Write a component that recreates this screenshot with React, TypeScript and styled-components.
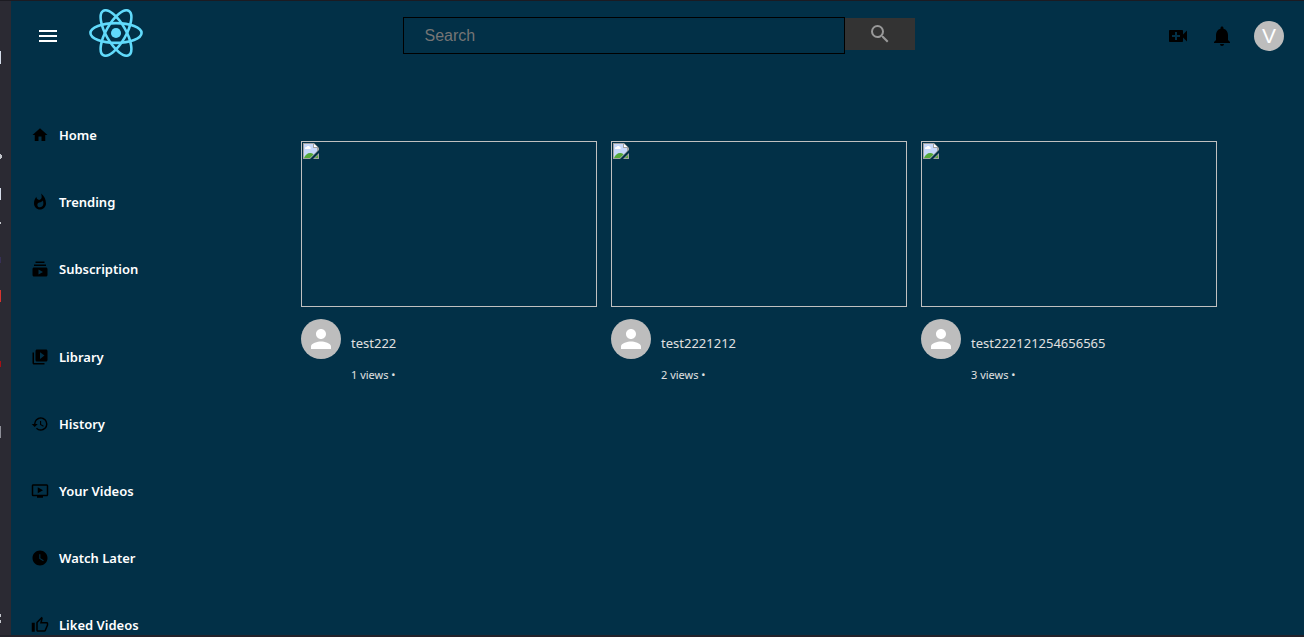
import React from "react";
import styled, { createGlobalStyle } from "styled-components";
import {
  MdHistory,
  MdHome,
  MdMenu,
  MdNotifications,
  MdOndemandVideo,
  MdPerson,
  MdSearch,
  MdSubscriptions,
  MdVideoCall,
  MdVideoLibrary,
  MdWatchLater,
  MdWhatshot,
} from "react-icons/md";

const GlobalStyle = createGlobalStyle`
  *, *::before, *::after { box-sizing: border-box; }
  body {
    margin: 0;
    background: #023047;
    font-family: "Segoe UI", "Noto Sans", sans-serif;
  }
  svg { display: block; flex-shrink: 0; }
`;

const Shell = styled.div`
  display: flex;
  height: 100vh;
  overflow: hidden;
  border-top: 1px solid #1c1b22;
  border-bottom: 2px solid #23222a;
`;

const Dock = styled.div`
  flex: 0 0 11px;
  background: #2b2a33;
`;

const Page = styled.div`
  flex: 1;
  min-width: 0;
  background: #023047;
`;

const Header = styled.header`
  display: flex;
  align-items: center;
  justify-content: space-between;
  height: 70px;
  padding: 0 20px 0 25px;
`;

const HeaderGroup = styled.div<{ $gap: number }>`
  display: flex;
  align-items: center;
  gap: ${({ $gap }) => $gap}px;
`;

const IconButton = styled.button<{ $color: string }>`
  display: flex;
  padding: 0;
  border: 0;
  background: none;
  color: ${({ $color }) => $color};
  cursor: pointer;
`;

const LogoLink = styled.a`
  display: flex;
  justify-content: center;
  width: 71px;
  padding-bottom: 6px;
`;

const SearchForm = styled.form`
  display: flex;
  flex: 0 1 512px;
  align-items: flex-start;
  min-width: 0;
  padding-bottom: 1px;
`;

const SearchInput = styled.input`
  flex: 1;
  min-width: 0;
  height: 37px;
  padding: 1px 21px 0;
  border: 1px solid #000;
  border-radius: 0;
  background: transparent;
  color: #fff;
  font: 16px "Liberation Sans", Arial, sans-serif;
  outline: 0;
  &::placeholder { color: #757575; opacity: 1; }
`;

const SearchButton = styled.button`
  display: flex;
  align-items: center;
  justify-content: center;
  width: 70px;
  height: 32px;
  margin-top: 1px;
  padding: 0;
  border: 0;
  background: #333;
  color: #999;
  cursor: pointer;
`;

const Avatar = styled.span<{ $size: number }>`
  display: flex;
  flex: 0 0 auto;
  align-items: center;
  justify-content: center;
  width: ${({ $size }) => $size}px;
  height: ${({ $size }) => $size}px;
  border-radius: 50%;
  background: #bdbdbd;
  color: #fff;
  font: 21px/20px "Liberation Sans", Arial, sans-serif;
`;

const Body = styled.div`
  display: flex;
`;

const Sidebar = styled.nav`
  flex: 0 0 290px;
  padding: 30px 20px 0;
`;

const NavList = styled.ul`
  margin: 0 0 21px;
  padding: 0;
  list-style: none;
`;

const NavLink = styled.a`
  display: flex;
  align-items: center;
  gap: 10px;
  height: 67px;
  color: #fff;
  font-size: 13px;
  font-weight: 600;
  line-height: 20px;
  text-decoration: none;
  svg { color: #000; }
`;

const VideoGrid = styled.main`
  display: grid;
  flex: 1;
  grid-template-columns: repeat(auto-fill, 296px);
  gap: 14px;
  align-content: start;
  padding-top: 70px;
`;

const Thumbnail = styled.div`
  height: 166px;
  padding: 1px;
  border: 1px solid #c0c0c0;
`;

const VideoInfo = styled.div`
  display: flex;
  gap: 10px;
  margin-top: 12px;
`;

const VideoTitle = styled.h2`
  margin: 14px 0 12px;
  color: #e0e0e0;
  font-size: 13px;
  font-weight: 400;
  line-height: 20px;
`;

const VideoViews = styled.p`
  margin: 0;
  color: #e0e0e0;
  font-size: 11px;
  line-height: 20px;
`;

const ReactLogo = () => (
  <svg width="54" height="48" viewBox="-11.5 -10.23 23 20.46" aria-hidden="true">
    <circle r="2.15" fill="#61dafb" />
    <g stroke="#61dafb" strokeWidth="1.1" fill="none">
      <ellipse rx="10.9" ry="4.2" />
      <ellipse rx="10.9" ry="4.2" transform="rotate(60)" />
      <ellipse rx="10.9" ry="4.2" transform="rotate(120)" />
    </g>
  </svg>
);

const ThumbOutline = ({ size }: { size: number }) => (
  <svg width={size} height={size} viewBox="0 0 24 24" fill="currentColor" aria-hidden="true">
    <path d="M9 21h9c.83 0 1.54-.5 1.84-1.22l3.02-7.05c.09-.23.14-.47.14-.73v-2c0-1.1-.9-2-2-2h-6.31l.95-4.57.03-.32c0-.41-.17-.79-.44-1.06L14.17 1 7.58 7.59C7.22 7.95 7 8.45 7 9v10c0 1.1.9 2 2 2zM9 9l4.34-4.34L12 10h9v2l-3 7H9V9zM1 9h4v12H1z" />
  </svg>
);

const MissingPicture = () => (
  <svg width="16" height="16" viewBox="0 0 16 16" role="img" aria-label="Missing thumbnail">
    <path d="M0 0h11l5 5v2L7 16H0z" fill="#a3a3a3" />
    <path d="M1 1h9v4h4v3L7 15H1z" fill="#c6d8fa" />
    <path d="M2 5c0-1 1-1 1.500-1 .5-1.500 3-1.500 3.500 0C8 4 8 6 7 6H2z" fill="#fff" />
    <path d="M1 15c1-3 3.500-5 6-5 1.500 0 3 .5 3.500 1.500L7 15z" fill="#56a93a" />
    <path d="M11 1v3h3.500z" fill="#fff" />
    <path d="M16 10v6h-6z" fill="#a3a3a3" />
    <path d="M15 12v3h-3z" fill="#56a93a" />
  </svg>
);

/* Right-hand edges of the dock icons that reach into view. */
const DockEdges = () => (
  <svg width="2" height="634" viewBox="0 0 2 634" aria-hidden="true">
    <path d="M0 50h1v13H0zM0 187h1v12H0z" fill="#d5dcea" />
    <path d="M0 153h1v1h1v3H1v1H0zM0 221h1v2H0zM0 613h1v3H0zM0 619h1v3H0z" fill="#c4c6cc" />
    <path d="M0 256h1v6H0z" fill="#373057" />
    <path d="M0 289h1v12H0z" fill="#d8342f" />
    <path d="M0 360h1v6H0z" fill="#a80f14" />
    <path d="M0 425h1v12H0z" fill="#8e8f98" />
  </svg>
);

const primaryLinks = [
  { label: "Home", Icon: MdHome },
  { label: "Trending", Icon: MdWhatshot },
  { label: "Subscription", Icon: MdSubscriptions },
];

const libraryLinks = [
  { label: "Library", Icon: MdVideoLibrary },
  { label: "History", Icon: MdHistory },
  { label: "Your Videos", Icon: MdOndemandVideo },
  { label: "Watch Later", Icon: MdWatchLater },
  { label: "Liked Videos", Icon: ThumbOutline },
];

const videos = [
  { title: "test222", views: 1 },
  { title: "test2221212", views: 2 },
  { title: "test222121254656565", views: 3 },
];

export default function App() {
  return (
    <>
      <GlobalStyle />
      <Shell>
        <Dock>
          <DockEdges />
        </Dock>
        <Page>
          <Header>
            <HeaderGroup $gap={20}>
              <IconButton $color="#fff" aria-label="Menu">
                <MdMenu size={24} />
              </IconButton>
              <LogoLink href="#" aria-label="Home page">
                <ReactLogo />
              </LogoLink>
            </HeaderGroup>
            <SearchForm onSubmit={(event) => event.preventDefault()}>
              <SearchInput type="text" placeholder="Search" aria-label="Search" />
              <SearchButton type="submit" aria-label="Submit search">
                <MdSearch size={24} />
              </SearchButton>
            </SearchForm>
            <HeaderGroup $gap={20}>
              <IconButton $color="#000" aria-label="Create video">
                <MdVideoCall size={24} />
              </IconButton>
              <IconButton $color="#000" aria-label="Notifications">
                <MdNotifications size={24} />
              </IconButton>
              <Avatar $size={30}>V</Avatar>
            </HeaderGroup>
          </Header>
          <Body>
            <Sidebar>
              {[primaryLinks, libraryLinks].map((links) => (
                <NavList key={links[0].label}>
                  {links.map(({ label, Icon }) => (
                    <li key={label}>
                      <NavLink href="#">
                        <Icon size={18} />
                        {label}
                      </NavLink>
                    </li>
                  ))}
                </NavList>
              ))}
            </Sidebar>
            <VideoGrid>
              {videos.map(({ title, views }) => (
                <article key={title}>
                  <Thumbnail>
                    <MissingPicture />
                  </Thumbnail>
                  <VideoInfo>
                    <Avatar $size={40}>
                      <MdPerson size={30} />
                    </Avatar>
                    <div>
                      <VideoTitle>{title}</VideoTitle>
                      <VideoViews>{views} views •</VideoViews>
                    </div>
                  </VideoInfo>
                </article>
              ))}
            </VideoGrid>
          </Body>
        </Page>
      </Shell>
    </>
  );
}
